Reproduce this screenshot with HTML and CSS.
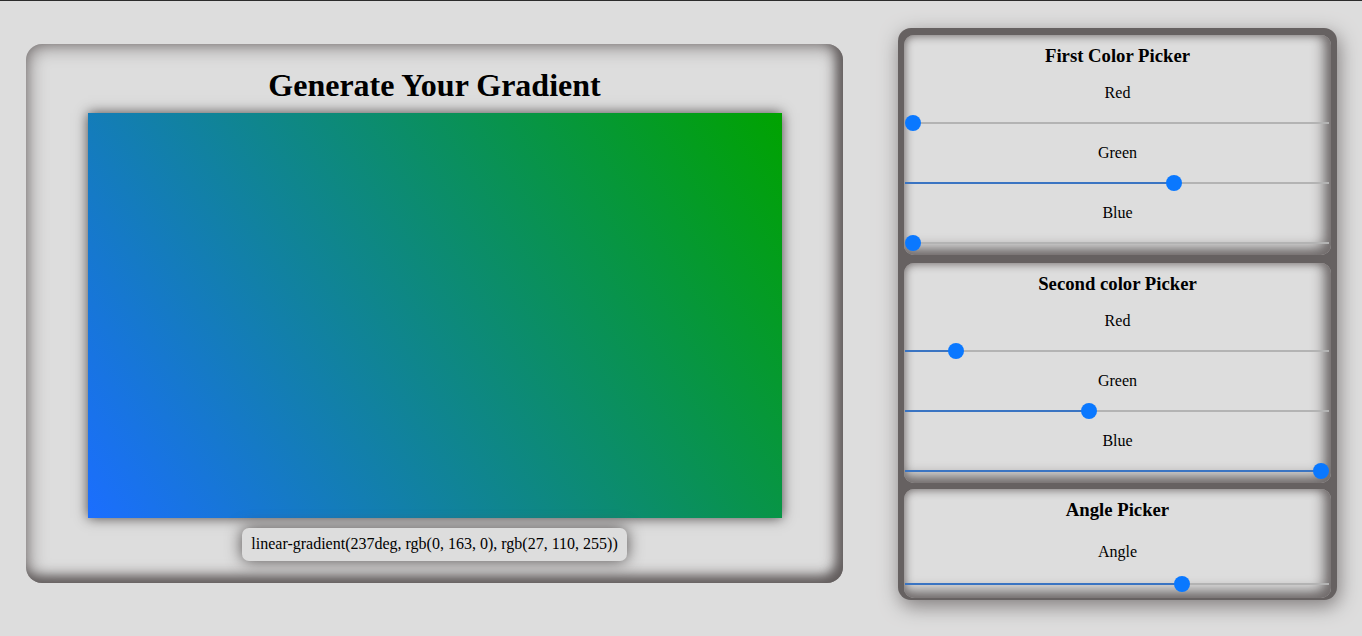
FILE: index.html
```html
<!DOCTYPE html>
<html lang="en">
<head>
<meta charset="utf-8">
<title>Gradient Generator</title>
<link rel="stylesheet" href="styles.css">
</head>
<body>
<main class="page">
  <section class="preview-card">
    <h1 class="preview-title">Generate Your Gradient</h1>
    <div class="preview-box"></div>
    <div class="code-box">linear-gradient(237deg, rgb(0, 163, 0), rgb(27, 110, 255))</div>
  </section>
  <aside class="controls">
    <section class="picker">
      <h3 class="picker-title">First Color Picker</h3>
      <label class="field-label" for="r1">Red</label>
      <input class="range" id="r1" type="range" min="0" max="255" value="0" style="--fill: 0%">
      <label class="field-label" for="g1">Green</label>
      <input class="range" id="g1" type="range" min="0" max="255" value="163" style="--fill: 63.4%">
      <label class="field-label" for="b1">Blue</label>
      <input class="range" id="b1" type="range" min="0" max="255" value="0" style="--fill: 0%">
    </section>
    <section class="picker picker-second">
      <h3 class="picker-title">Second color Picker</h3>
      <label class="field-label" for="r2">Red</label>
      <input class="range" id="r2" type="range" min="0" max="255" value="27" style="--fill: 12.1%">
      <label class="field-label" for="g2">Green</label>
      <input class="range" id="g2" type="range" min="0" max="255" value="110" style="--fill: 43.4%">
      <label class="field-label" for="b2">Blue</label>
      <input class="range" id="b2" type="range" min="0" max="255" value="255" style="--fill: 100%">
    </section>
    <section class="picker picker-angle">
      <h3 class="picker-title">Angle Picker</h3>
      <label class="field-label" for="a1">Angle</label>
      <input class="range" id="a1" type="range" min="0" max="360" value="237" style="--fill: 65.2%">
    </section>
  </aside>
</main>
</body>
</html>
```
FILE: styles.css
```css
* { box-sizing: border-box; }

html, body {
  margin: 0;
  padding: 0;
}

body {
  background: #dddddd;
  border-top: 1px solid #2b2b2b;
  font-family: "Liberation Serif", "Times New Roman", serif;
  color: #000;
  height: 636px;
  overflow: hidden;
}

.page {
  height: 625px;
  display: flex;
  justify-content: space-between;
  align-items: center;
  padding: 0 25px 0 26px;
}

.preview-card {
  width: 817px;
  height: 539px;
  flex: none;
  border-radius: 16px;
  background: #dddddd;
  box-shadow: inset 0 0 20px #676161, inset -6px -6px 12px #5a5555;
  display: flex;
  flex-direction: column;
  align-items: center;
  padding: 22px 0 22px;
}

.preview-title {
  margin: 0;
  font-size: 32px;
  line-height: 38px;
  font-weight: bold;
}

.preview-box {
  margin-top: 9px;
  width: 694px;
  height: 405px;
  flex: none;
  background: linear-gradient(237deg, rgb(0, 163, 0), rgb(27, 110, 255));
  box-shadow: 0 0 12px #4a4646;
}

.code-box {
  margin-top: 10px;
  padding: 7px 9px 8px;
  font-size: 16px;
  line-height: 18px;
  background: #dddddd;
  border-radius: 7px;
  box-shadow: 0 0 16px #4f4b4b;
}

.controls {
  width: 439px;
  height: 572px;
  flex: none;
  margin-top: 1px;
  border-radius: 13px;
  background: #666161;
  padding: 7px 6px 3px;
  box-shadow: 2px 6px 20px #807c7c;
  display: flex;
  flex-direction: column;
}

.picker {
  background: #dddddd;
  border-radius: 10px;
  box-shadow: inset 0 0 10px #767070, inset -6px -6px 14px #6a6565;
  display: flex;
  flex-direction: column;
  align-items: center;
  padding: 10px 0 3px;
  height: 220px;
  flex: none;
  overflow: hidden;
}

.picker-second {
  margin-top: 8px;
}

.picker-angle {
  margin-top: 6px;
  height: 109px;
  padding-bottom: 5px;
}

.picker-title {
  margin: 0;
  font-size: 18.72px;
  line-height: 22px;
  font-weight: bold;
}

.field-label {
  display: block;
  margin-top: 13px;
  font-size: 16px;
  line-height: 18px;
}

.picker-title + .field-label {
  margin-top: 17px;
}

.range {
  -webkit-appearance: none;
  appearance: none;
  display: block;
  width: calc(100% - 3px);
  height: 16px;
  margin: 13px 2px 0 1px;
  background: transparent;
  outline: none;
}

.range::-webkit-slider-runnable-track {
  height: 2px;
  background: linear-gradient(to right, #3a74c2 0, #3a74c2 var(--fill), #b3b3b3 var(--fill), #b3b3b3 100%);
  border: none;
}

.range::-webkit-slider-thumb {
  -webkit-appearance: none;
  appearance: none;
  width: 16px;
  height: 16px;
  margin-top: -7px;
  border-radius: 50%;
  background: #0a78ff;
  border: none;
}

.picker-angle .picker-title + .field-label {
  margin-top: 22px;
}

.picker-angle .range {
  margin-top: 15px;
}
```
